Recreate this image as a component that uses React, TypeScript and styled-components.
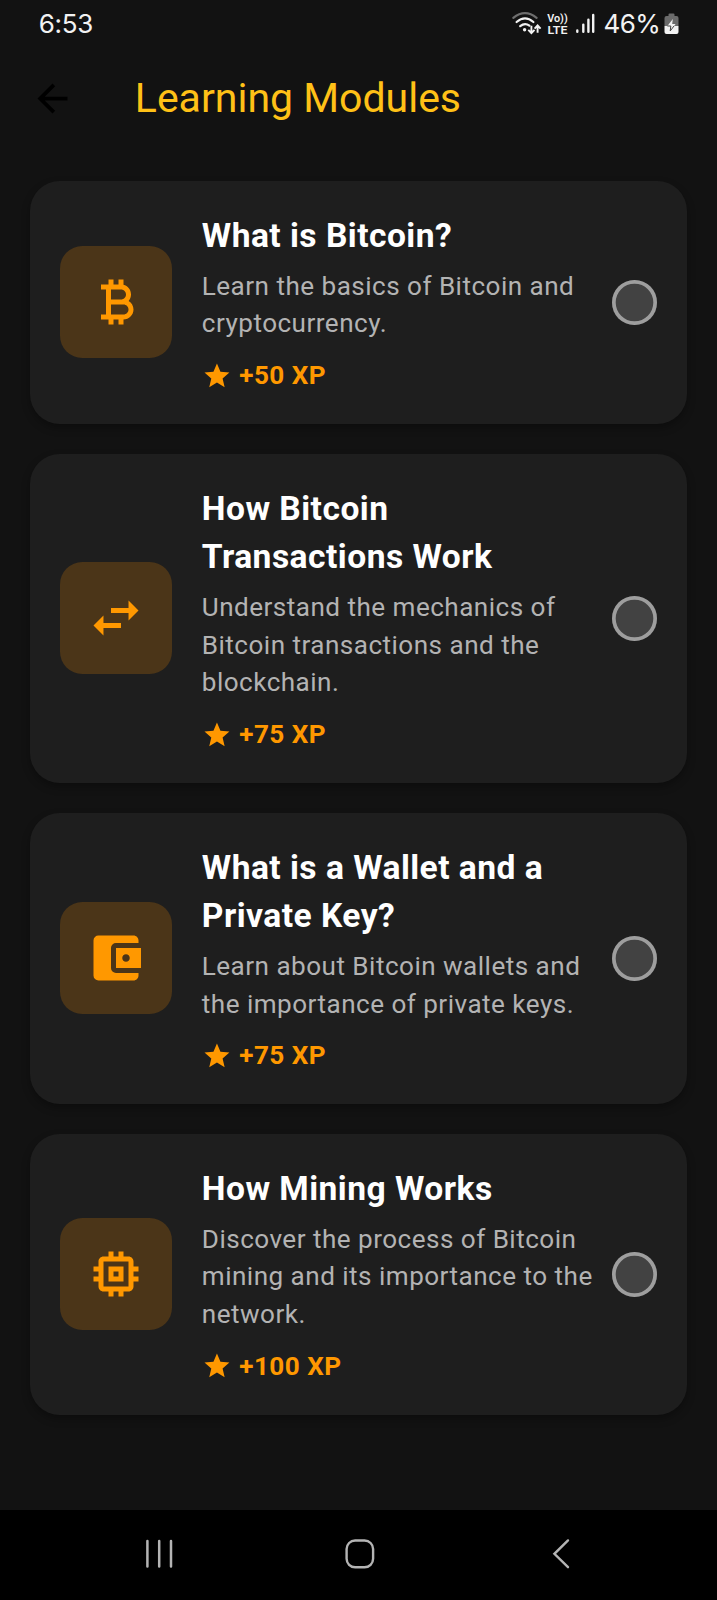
import React from "react";
import styled, { createGlobalStyle } from "styled-components";
import {
  MdAccountBalanceWallet,
  MdArrowBack,
  MdCurrencyBitcoin,
  MdMemory,
  MdStar,
  MdSwapHoriz,
} from "react-icons/md";
import type { IconType } from "react-icons";

const GlobalStyle = createGlobalStyle`
  * { box-sizing: border-box; }
  body {
    margin: 0;
    background: #121212;
    font-family: Roboto, sans-serif;
  }
`;

const Screen = styled.div`
  display: flex;
  flex-direction: column;
  width: 717px;
  height: 1600px;
  overflow: hidden;
  background: #121212;
`;

const StatusBar = styled.header`
  display: flex;
  align-items: flex-start;
  justify-content: space-between;
  height: 47px;
  padding: 0 38px 0 38.8px;
  color: #f2f2f2;
  font-family: Inter, sans-serif;
  font-size: 26px;
  line-height: 48px;
`;

const Clock = styled.span`
  letter-spacing: -0.3px;
`;

const StatusIcons = styled.div`
  display: flex;
  align-items: center;
  height: 47px;
`;

const Battery = styled.span`
  width: 60.5px;
  height: 47px;
  margin-left: 6.5px;
  letter-spacing: -0.6px;
`;

const AppBar = styled.div`
  display: flex;
  align-items: center;
  height: 104.2px;
  padding: 0 0 2px 30px;
`;

const BackButton = styled.button`
  display: flex;
  width: 45px;
  height: 45px;
  margin: 0 59.8px 0 0;
  padding: 0;
  border: 0;
  background: none;
  color: #000;
  font-size: 45px;
`;

const PageTitle = styled.h1`
  margin: 0;
  color: #ffc117;
  font-size: 41px;
  font-weight: 400;
  line-height: 52px;
`;

const ModuleList = styled.main`
  display: flex;
  flex: 1;
  flex-direction: column;
  gap: 29.8px;
  padding: 29.9px 30px;
`;

const Card = styled.article`
  display: flex;
  align-items: center;
  padding: 29.9px;
  border-radius: 29.9px;
  background: #1e1e1e;
  box-shadow: 0 4px 8px rgba(0, 0, 0, 0.3);
`;

const IconTile = styled.div`
  display: flex;
  flex: none;
  align-items: center;
  justify-content: center;
  width: 112px;
  height: 112px;
  margin: 0 29.9px 0.8px 0;
  border-radius: 22.4px;
  background: #4b3518;
  color: #ff9800;
  font-size: 60px;
`;

const Details = styled.div`
  flex: 1;
  min-width: 0;
  padding-top: 0.9px;
  white-space: pre;
`;

const ModuleTitle = styled.h2`
  margin: 0 0 7.5px;
  color: #fff;
  font-size: 33.6px;
  font-weight: 700;
  line-height: 48.5px;
  letter-spacing: 0.47px;
`;

const Description = styled.p`
  margin: 0 0 14.6px;
  color: #b3b3b3;
  font-size: 26.1px;
  line-height: 37.5px;
  letter-spacing: 0.47px;
`;

const Reward = styled.div`
  display: flex;
  align-items: center;
  gap: 7.5px;
  height: 36.8px;
  color: #ff9800;
  font-size: 26.1px;
  font-weight: 700;
  line-height: 37.4px;
  letter-spacing: 0.47px;

  svg {
    font-size: 29.9px;
  }
`;

const StatusRing = styled.div`
  flex: none;
  width: 44.8px;
  height: 44.8px;
  border-radius: 50%;
  background: #424242;
  box-shadow: inset 0 0 0 3.7px #9e9e9e;
`;

const NavBar = styled.nav`
  display: flex;
  align-items: center;
  gap: 166px;
  height: 90px;
  padding: 0 0 2px 145px;
  background: #000;
`;

interface Module {
  icon: IconType;
  title: string;
  description: string;
  xp: number;
}

const modules: Module[] = [
  {
    icon: MdCurrencyBitcoin,
    title: "What is Bitcoin?",
    description: "Learn the basics of Bitcoin and\ncryptocurrency.",
    xp: 50,
  },
  {
    icon: MdSwapHoriz,
    title: "How Bitcoin\nTransactions Work",
    description:
      "Understand the mechanics of\nBitcoin transactions and the\nblockchain.",
    xp: 75,
  },
  {
    icon: MdAccountBalanceWallet,
    title: "What is a Wallet and a\nPrivate Key?",
    description:
      "Learn about Bitcoin wallets and\nthe importance of private keys.",
    xp: 75,
  },
  {
    icon: MdMemory,
    title: "How Mining Works",
    description:
      "Discover the process of Bitcoin\nmining and its importance to the\nnetwork.",
    xp: 100,
  },
];

function ModuleCard({ icon: Icon, title, description, xp }: Module) {
  return (
    <Card>
      <IconTile>
        <Icon />
      </IconTile>
      <Details>
        <ModuleTitle>{title}</ModuleTitle>
        <Description>{description}</Description>
        <Reward>
          <MdStar />+{xp} XP
        </Reward>
      </Details>
      <StatusRing />
    </Card>
  );
}

/* Wi-Fi, VoLTE and cellular signal indicators */
function SignalIcons() {
  return (
    <svg width="86" height="26" viewBox="0 0 86 26" fill="none">
      <g strokeWidth="2.2" strokeLinecap="round">
        <path d="M2.3 6.8Q14 -2.6 25.6 6.8" stroke="#6e6e6e" />
        <path d="M5.6 11Q14 3.8 22.4 11" stroke="#f2f2f2" />
        <path d="M9.2 15.2Q13.8 11.2 18.4 14.6" stroke="#f2f2f2" />
      </g>
      <circle cx="13.6" cy="18.8" r="1.7" fill="#f2f2f2" />
      <g stroke="#f2f2f2" strokeWidth="1.9">
        <path d="M20.4 14.8V22M17.3 18.9L20.4 22.2L23.5 18.9" />
        <path d="M26.6 21.8V14.4M23.6 17.7L26.6 14.5L29.6 17.7" />
      </g>
      <g fill="#f2f2f2" fontFamily="Roboto, sans-serif" fontWeight="600">
        <text x="36.2" y="11.2" fontSize="10.8" textLength="20.5" lengthAdjust="spacingAndGlyphs">
          Vo))
        </text>
        <text x="36.6" y="22.9" fontSize="10.4" textLength="19.8" lengthAdjust="spacingAndGlyphs">
          LTE
        </text>
      </g>
      <g stroke="#f2f2f2" strokeWidth="2.4" strokeLinecap="round">
        <path d="M66.3 19.4V20.8M72.3 13.6V20.8M77.4 8.8V20.8M82.2 4V20.8" />
      </g>
    </svg>
  );
}

function BatteryIcon() {
  return (
    <svg width="15" height="22" viewBox="0 0 15 22">
      <path
        d="M4.5 1.5Q4.5 .5 5.5 .5H9.5Q10.5 .5 10.5 1.5V3H12.5Q14.5 3 14.5 5V13H.5V5Q.5 3 2.5 3H4.5Z"
        fill="#6b6b6b"
      />
      <path d="M.5 13H14.5V19Q14.5 21 12.5 21H2.5Q.5 21 .5 19Z" fill="#f2f2f2" />
      <path d="M8.8 6L3.4 13H6.8L6.2 18L11.6 11H8.2Z" fill="#f2f2f2" />
      <path d="M3.4 13H6.8L6.2 18L10 13" fill="none" stroke="#444" strokeWidth="1" />
    </svg>
  );
}

export default function App() {
  return (
    <>
      <GlobalStyle />
      <Screen>
        <StatusBar>
          <Clock>6:53</Clock>
          <StatusIcons>
            <SignalIcons />
            <Battery>46%</Battery>
            <BatteryIcon />
          </StatusIcons>
        </StatusBar>
        <AppBar>
          <BackButton aria-label="Back">
            <MdArrowBack />
          </BackButton>
          <PageTitle>Learning Modules</PageTitle>
        </AppBar>
        <ModuleList>
          {modules.map((module) => (
            <ModuleCard key={module.title} {...module} />
          ))}
        </ModuleList>
        <NavBar>
          <svg width="33" height="32" viewBox="0 0 33 32" stroke="#b4b4b4" strokeWidth="2.5" strokeLinecap="round">
            <path d="M2.4 3V28.6M14.2 3V28.6M26 3V28.6" />
          </svg>
          <svg width="42" height="32" viewBox="0 0 42 32" fill="none" stroke="#b4b4b4" strokeWidth="2.4">
            <rect x="2.6" y="2.5" width="26.5" height="26.8" rx="8.5" />
          </svg>
          <svg width="18" height="32" viewBox="0 0 18 32" fill="none" stroke="#b4b4b4" strokeWidth="2.4" strokeLinecap="round">
            <path d="M16 2.4L2.4 15.8L16 29.2" />
          </svg>
        </NavBar>
      </Screen>
    </>
  );
}
